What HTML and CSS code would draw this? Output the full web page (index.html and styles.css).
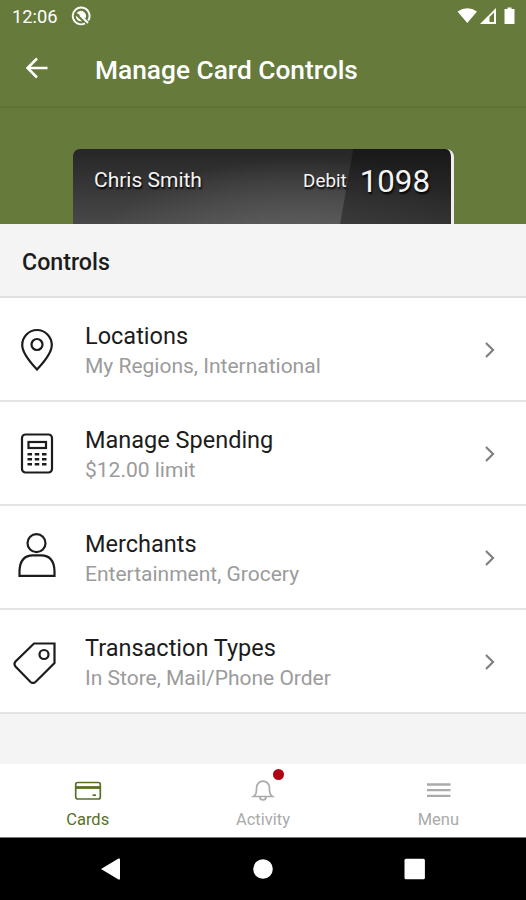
FILE: index.html
```html
<!DOCTYPE html>
<html lang="en">
<head>
    <meta charset="UTF-8">
    <meta name="viewport" content="width=device-width, initial-scale=1.0">
    <title>Manage Card Controls</title>
    <link rel="stylesheet" href="styles.css">
</head>
<body>
    <div class="status-bar">
        <span class="clock">12:06</span>
        <svg class="status-app" width="20" height="20" viewBox="0 0 20 20">
            <path d="M14 17.400A8.400 8.400 0 1 1 17.200 14.500" fill="none" stroke="#fff" stroke-width="1.900"/>
            <path d="M5.700 7A5.200 5.200 0 0 1 14.500 12.500zM4.800 9.500L11 15.200A5.200 5.200 0 0 1 4.800 9.500z" fill="#fff"/>
            <path d="M9 9l8 8" stroke="#fff" stroke-width="2"/>
        </svg>
        <svg class="status-icons" width="60" height="20" viewBox="0 0 60 20">
            <path d="M.5 5.500Q10.500-1 20 5.500L10.300 17z" fill="#fff"/>
            <path d="M39 2v16H23z" fill="#fff"/>
            <path d="M32.500 16v-5l4.500-4.500V16z" fill="#657a3b"/>
            <path d="M47.500 3h3V1.500h4V3h3v15h-10z" fill="#fff"/>
        </svg>
    </div>

    <header class="header">
        <svg class="back" width="24" height="24" viewBox="0 0 24 24">
            <path d="M22.500 12H3M12 2.500L2.500 12l9.500 9.500" fill="none" stroke="#fff" stroke-width="2.500"/>
        </svg>
        <h1>Manage Card Controls</h1>
    </header>

    <section class="card-area">
        <div class="card">
            <span class="card-name">Chris Smith</span>
            <span class="card-type">Debit</span>
            <span class="card-number">1098</span>
        </div>
    </section>

    <main>
        <h2>Controls</h2>
        <ul class="controls">
            <li class="control">
                <svg class="control-icon" width="44" height="44" viewBox="0 0 44 44">
                    <path d="M24 41.500C20 37 9.200 26.500 9.200 17A14.800 15 0 0 1 38.800 17C38.800 26.500 28 37 24 41.500z"/>
                    <circle cx="24" cy="16.500" r="5.500"/>
                </svg>
                <div class="control-text">
                    <div class="control-title">Locations</div>
                    <div class="control-info">My Regions, International</div>
                </div>
                <svg class="chevron" width="12" height="18" viewBox="0 0 12 18"><path d="M2 2l7 7-7 7"/></svg>
            </li>
            <li class="control">
                <svg class="control-icon" width="44" height="44" viewBox="0 0 44 44">
                    <rect x="9" y="2.500" width="30" height="38" rx="3.500"/>
                    <rect x="15.500" y="10" width="17.500" height="6"/>
                    <path d="M14.500 22.200h19M14.500 27.200h19M14.500 32.200h19" stroke-width="2.600" stroke-dasharray="4.500 2.750"/>
                </svg>
                <div class="control-text">
                    <div class="control-title">Manage Spending</div>
                    <div class="control-info">$12.00 limit</div>
                </div>
                <svg class="chevron" width="12" height="18" viewBox="0 0 12 18"><path d="M2 2l7 7-7 7"/></svg>
            </li>
            <li class="control">
                <svg class="control-icon" width="44" height="50" viewBox="0 0 44 50">
                    <circle cx="23.500" cy="10.200" r="9"/>
                    <path d="M6.500 42.800V38Q7 22.300 20 22.300h8Q41 22.300 41.500 38v4.800z"/>
                </svg>
                <div class="control-text">
                    <div class="control-title">Merchants</div>
                    <div class="control-info">Entertainment, Grocery</div>
                </div>
                <svg class="chevron" width="12" height="18" viewBox="0 0 12 18"><path d="M2 2l7 7-7 7"/></svg>
            </li>
            <li class="control">
                <svg class="control-icon" width="44" height="44" viewBox="0 0 44 44">
                    <path d="M21 3.500H41.500V23L22.500 42Q20 44 17.500 42L2.500 26.500Q.500 24 2.500 21.500z"/>
                    <circle cx="31" cy="14.500" r="4.500"/>
                </svg>
                <div class="control-text">
                    <div class="control-title">Transaction Types</div>
                    <div class="control-info">In Store, Mail/Phone Order</div>
                </div>
                <svg class="chevron" width="12" height="18" viewBox="0 0 12 18"><path d="M2 2l7 7-7 7"/></svg>
            </li>
        </ul>
    </main>

    <nav class="tabs">
        <a class="tab active">
            <svg width="28" height="24" viewBox="0 0 28 24">
                <rect x="1.700" y="4.500" width="24.600" height="16.500" rx="2"/>
                <path d="M2 9.500h24" stroke-width="2.800"/>
                <path d="M18.500 17.200h3.500"/>
            </svg>
            <span>Cards</span>
        </a>
        <a class="tab">
            <svg width="28" height="24" viewBox="0 0 28 24">
                <path d="M4.500 18.500Q7.500 16.500 7.500 12V10a6.500 6.800 0 0 1 13 0v2q0 4.500 3 6.500zM11 19q0 3 3 3t3-3"/>
            </svg>
            <span>Activity</span>
            <i class="badge"></i>
        </a>
        <a class="tab">
            <svg width="28" height="24" viewBox="0 0 28 24">
                <path d="M3 6.500h23.500M3 12.200h23.500M3 17.900h23.500" stroke-width="2.300"/>
            </svg>
            <span>Menu</span>
        </a>
    </nav>

    <div class="android-nav">
        <svg width="24" height="24" viewBox="0 0 24 24"><path d="M2 12L19.500 1.500q1.500-.5 1.500 1v19q0 1.500-1.500 1z"/></svg>
        <svg width="24" height="24" viewBox="0 0 24 24"><circle cx="12" cy="12" r="9.800"/></svg>
        <svg width="24" height="24" viewBox="0 0 24 24"><rect x="1.500" y="1.800" width="20.400" height="20.400" rx="1.500"/></svg>
    </div>
</body>
</html>
```

FILE: styles.css
```css
* {
    box-sizing: border-box;
}

body {
    margin: 0;
    height: 900px;
    display: flex;
    flex-direction: column;
    overflow: hidden;
    font-family: Roboto, sans-serif;
    background-color: #f4f4f4;
    color: #1c1c1c;
}

h1, h2, ul {
    margin: 0;
    padding: 0;
}

.status-bar {
    height: 32px;
    padding: 0 9px 0 12px;
    display: flex;
    align-items: center;
    background-color: #657a3b;
    color: #fff;
}

.clock {
    width: 59px;
    font-size: 18.3px;
    line-height: 34px;
    padding-top: 2px;
}

.status-icons {
    margin-left: auto;
}

.header {
    height: 76px;
    padding: 0 25px;
    display: flex;
    align-items: center;
    background-color: #657a3b;
    border-bottom: 2px solid #5f7437;
    color: #fff;
}

.back {
    margin-bottom: 2px;
}

.header h1 {
    margin-left: 46px;
    padding-top: 2px;
    font-size: 26.3px;
    font-weight: 500;
}

.card-area {
    height: 116px;
    padding: 41px 72px 0 73px;
    background-color: #657a3b;
}

.card {
    height: 75px;
    padding: 0 21px 11px;
    display: flex;
    align-items: center;
    color: #f4f4f4;
    border-right: 3px solid #eee;
    border-radius: 7px 8px 0 0;
    background: linear-gradient(100deg, transparent 71.5%, rgba(0, 0, 0, 0.35) 71.8%), radial-gradient(ellipse at 60% 150%, #646464, transparent 65%), linear-gradient(#262626, #484848);
    text-shadow: 1px 2px 2px #000;
}

.card-name {
    padding-bottom: 3px;
    font-size: 21px;
}

.card-type {
    margin-left: auto;
    font-size: 18.8px;
}

.card-number {
    margin-left: 13px;
    font-size: 31.3px;
}

h2 {
    height: 72px;
    padding-left: 22px;
    font-size: 23.2px;
    font-weight: 500;
    line-height: 76px;
}

.controls {
    list-style: none;
    border-top: 2px solid #e0e0e0;
}

.control {
    height: 104px;
    padding: 1px 30px 0 13px;
    display: flex;
    align-items: center;
    background-color: #fff;
    border-bottom: 2px solid #e4e4e4;
}

.control-icon {
    fill: none;
    stroke: #1c1c1c;
    stroke-width: 2.2;
}

.control-text {
    flex: 1;
    margin-left: 28px;
    padding-top: 3px;
}

.control-title {
    font-size: 23.5px;
    line-height: 30px;
}

.control-info {
    font-size: 21px;
    line-height: 30px;
    color: #9b9b9b;
}

.chevron {
    fill: none;
    stroke: #808080;
    stroke-width: 2.2;
}

.tabs {
    height: 74px;
    margin-top: auto;
    display: flex;
    background-color: #fff;
    border-bottom: 1px solid #777;
}

.tab {
    position: relative;
    flex: 1;
    display: flex;
    flex-direction: column;
    align-items: center;
    padding-top: 14px;
    font-size: 16.5px;
    line-height: 20px;
    color: #aaa;
}

.tab svg {
    margin-bottom: 8px;
    fill: none;
    stroke: currentColor;
    stroke-width: 1.7;
}

.tab.active {
    color: #587027;
}

.badge {
    position: absolute;
    top: 5px;
    left: calc(50% + 10.5px);
    width: 11px;
    height: 11px;
    border-radius: 50%;
    background-color: #b00012;
}

.android-nav {
    height: 62px;
    padding: 0 99px;
    display: flex;
    align-items: center;
    justify-content: space-between;
    background-color: #000;
    fill: #fff;
}
```
